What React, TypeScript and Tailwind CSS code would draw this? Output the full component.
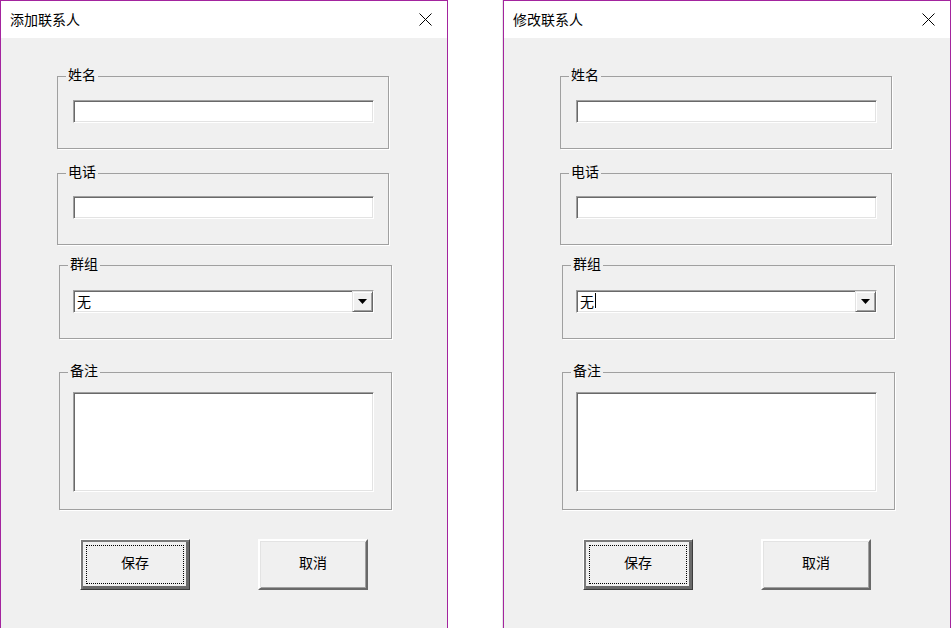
import type { ReactNode } from "react";

const sunken =
  "border border-t-[#a0a0a0] border-l-[#a0a0a0] border-b-white border-r-white shadow-[inset_1px_1px_0_#696969,inset_-1px_-1px_0_#e3e3e3] bg-white";

function CloseIcon() {
  return (
    <svg width="13" height="13" viewBox="0 0 13 13" className="block">
      <path d="M0.5 0.5 L12.5 12.5 M12.5 0.5 L0.5 12.5" stroke="#000" strokeWidth="1" fill="none" />
    </svg>
  );
}

interface GroupProps {
  label: string;
  className: string;
  children: ReactNode;
}

function Group({ label, className, children }: GroupProps) {
  return (
    <fieldset
      className={`border border-[#a0a0a0] shadow-[1px_1px_0_#ffffff] min-w-0 ${className}`}
    >
      <legend className="ml-[8px] px-[2px] text-[14px] leading-[18px] text-black">
        <span className="relative -top-[2px]">{label}</span>
      </legend>
      {children}
    </fieldset>
  );
}

function DropArrow() {
  return (
    <div className="w-[21px] h-[21px] flex items-center justify-center bg-[#f0f0f0] border border-t-[#e3e3e3] border-l-[#e3e3e3] border-b-[#696969] border-r-[#696969] shadow-[inset_1px_1px_0_#ffffff,inset_-1px_-1px_0_#a0a0a0]">
      <svg width="9" height="5" viewBox="0 0 9 5" className="block">
        <path d="M0 0 H9 L4.5 5 Z" fill="#000" />
      </svg>
    </div>
  );
}

function Dialog({ title, caret }: { title: string; caret?: boolean }) {
  return (
    <div className="w-[448px] h-[628px] border border-b-0 border-[#a3249e] flex flex-col bg-[#f0f0f0]">
      {/* title bar */}
      <div className="h-[37px] bg-white flex items-center justify-between pl-[9px] pr-[15px]">
        <span className="text-[14px] text-black">{title}</span>
        <CloseIcon />
      </div>

      <div className="flex flex-col">
        <Group label="姓名" className="mt-[29px] ml-[56px] w-[332px] h-[82px] pt-[15px]">
          <div className={`ml-[15px] w-[301px] h-[23px] ${sunken}`} />
        </Group>

        <Group label="电话" className="mt-[15px] ml-[56px] w-[332px] h-[81px] pt-[14px]">
          <div className={`ml-[15px] w-[301px] h-[23px] ${sunken}`} />
        </Group>

        <Group label="群组" className="mt-[11px] ml-[58px] w-[333px] h-[83px] pt-[16px]">
          <div className={`ml-[13px] w-[301px] h-[23px] flex items-center justify-between ${sunken}`}>
            <div className="flex items-center pl-[3px] relative -top-[1px]">
              <span className="text-[14px] leading-[16px] text-black">无</span>
              {caret && <span className="ml-[1px] w-px h-[15px] bg-black" />}
            </div>
            <DropArrow />
          </div>
        </Group>

        <Group label="备注" className="mt-[24px] ml-[58px] w-[333px] h-[147px] pt-[11px]">
          <div className={`ml-[13px] w-[301px] h-[100px] ${sunken}`} />
        </Group>

        <div className="mt-[29px] ml-[79px] flex gap-[68px]">
          <button className="w-[110px] h-[51px] p-[5px] flex bg-[#f0f0f0] border border-t-white border-l-white border-b-[#3c3c3c] border-r-[#3c3c3c] shadow-[inset_2px_2px_0_#7a7a7a,inset_-3px_-3px_0_#6a6a6a] text-[14px] text-black">
            <span className="flex-1 flex items-center justify-center border border-dotted border-black pb-[4px]">保存</span>
          </button>
          <button className="w-[110px] h-[51px] flex items-center justify-center pb-[4px] bg-[#f0f0f0] border-2 border-t-white border-l-white border-b-[#696969] border-r-[#696969] shadow-[inset_1px_1px_0_#e3e3e3,inset_-1px_-1px_0_#a0a0a0] text-[14px] text-black">
            取消
          </button>
        </div>
      </div>
    </div>
  );
}

export default function App() {
  return (
    <div className="w-[952px] h-[628px] overflow-hidden bg-white flex font-['Noto_Sans_CJK_SC','Microsoft_YaHei',sans-serif]">
      <Dialog title="添加联系人" />
      <div className="w-[55px] flex justify-end">
        <div className="w-px h-full bg-[#e6e6e6]" />
      </div>
      <Dialog title="修改联系人" caret />
    </div>
  );
}
